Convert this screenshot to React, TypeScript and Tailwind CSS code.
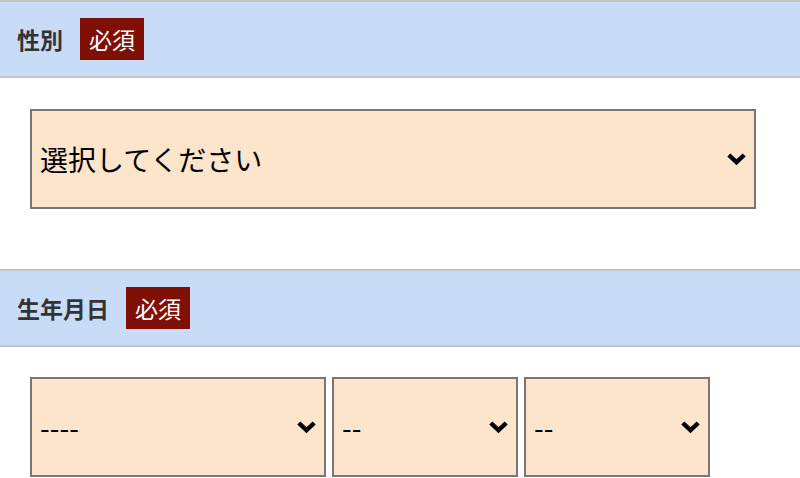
import React from 'react';

const Chevron = () => (
  <svg width="21" height="14" viewBox="0 0 21 14" className="shrink-0">
    <path d="M2.8 3l7.7 7.2 7.7-7.2" fill="none" stroke="#000" strokeWidth="4.4" strokeLinecap="butt" strokeLinejoin="miter" />
  </svg>
);

function FakeSelect({ value, className }: { value: string; className?: string }) {
  return (
    <div
      className={`flex h-[100px] items-center justify-between border-2 border-[#777777] bg-[#fde5cc] pl-[8px] pr-[7px] text-[28px] leading-none text-black ${className ?? ''}`}
    >
      <span>{value}</span>
      <Chevron />
    </div>
  );
}

function SectionHeader({ label }: { label: string }) {
  return (
    <div className="flex h-[78px] items-center border-y-2 border-[#c4c4c4] bg-[#c9dcf7] px-[17px]">
      <span className="text-[23px] font-bold leading-none text-[#333333]">{label}</span>
      <span className="ml-[17px] flex h-[42px] items-center bg-[#800f06] px-[9px] text-[23px] leading-none text-white">
        必須
      </span>
    </div>
  );
}

export default function App() {
  return (
    <div className="h-[478px] w-[800px] overflow-hidden bg-white font-['Noto_Sans_CJK_JP',sans-serif]">
      <SectionHeader label="性別" />
      <div className="px-[30px] pb-[60px] pt-[31px]">
        <FakeSelect value="選択してください" className="w-[726px]" />
      </div>

      <SectionHeader label="生年月日" />
      <div className="flex gap-[6px] px-[30px] pt-[30px]">
        <FakeSelect value="----" className="w-[296px]" />
        <FakeSelect value="--" className="w-[186px]" />
        <FakeSelect value="--" className="w-[186px]" />
      </div>
    </div>
  );
}
